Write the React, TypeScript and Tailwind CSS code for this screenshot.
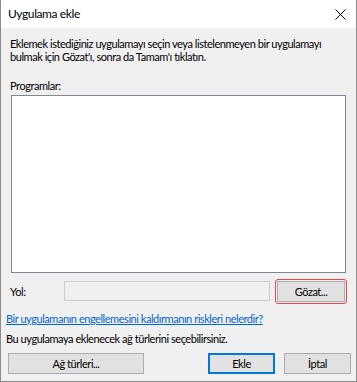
import React from "react";

const font = { fontFamily: '"Segoe UI", Lato, "Noto Sans", sans-serif' };

function WinButton({ label, className, focused }: { label: string; className?: string; focused?: boolean }) {
  return (
    <button
      className={
        "h-[21px] flex items-center justify-center text-[11px] text-black bg-[#e1e1e1] " +
        (focused ? "border-2 border-[#0078d7] " : "border border-[#adadad] ") +
        (className ?? "")
      }
    >
      {label}
    </button>
  );
}

export default function App() {
  return (
    <div
      className="w-[357px] h-[382px] bg-[#f0f0f0] border-l border-r border-b border-[#8c8c8c] flex flex-col text-black tracking-[-0.45px] overflow-hidden"
      style={font}
    >
      {/* title bar */}
      <div className="h-[28px] bg-white flex items-center justify-between pl-[7px] pr-[9px] shrink-0">
        <span className="text-[12px] tracking-[-0.4px]">Uygulama ekle</span>
        <svg width="11" height="11" viewBox="0 0 11 11" className="mr-[1px]">
          <path d="M0.5 0.5 L10.5 10.5 M10.5 0.5 L0.5 10.5" stroke="#000" strokeWidth="1" />
        </svg>
      </div>

      <div className="flex flex-col px-[9px] text-[11px] leading-[13px] shrink-0">
        <p className="mt-[9px] h-[26px] whitespace-nowrap">
          Eklemek istediğiniz uygulamayı seçin veya listelenmeyen bir uygulamayı
          <br />
          bulmak için Gözat'ı, sonra da Tamam'ı tıklatın.
        </p>

        <div className="mt-[16px] h-[14px] leading-[14px]">Programlar:</div>
        <div className="mt-[2px] ml-[1px] h-[178px] w-[335px] bg-white border border-[#828790]" />

        <div className="mt-[5px] h-[26px] flex items-center">
          <span className="w-[54px]">Yol:</span>
          <div className="h-[20px] w-[208px] bg-[#f0f0f0] border border-[#cccccc]" />
          <div className="ml-[5px] rounded-[3px] border border-[#e8474f] p-[1px]">
            <WinButton label="Gözat..." className="w-[68px]" />
          </div>
        </div>
      </div>

      <div className="flex flex-col px-[5px] text-[11px] leading-[14px] shrink-0">
        <a className="mt-[8px] h-[14px] text-[#0066cc] underline whitespace-nowrap">
          Bir uygulamanın engellemesini kaldırmanın riskleri nelerdir?
        </a>
        <p className="mt-[6px] h-[14px] whitespace-nowrap">Bu uygulamaya eklenecek ağ türlerini seçebilirsiniz.</p>
        <div className="mt-[7px] flex items-center pl-[2px]">
          <WinButton label="Ağ türleri..." className="w-[136px]" />
          <WinButton label="Ekle" className="w-[67px] ml-[64px]" focused />
          <WinButton label="İptal" className="w-[67px] ml-[9px]" />
        </div>
      </div>
    </div>
  );
}
